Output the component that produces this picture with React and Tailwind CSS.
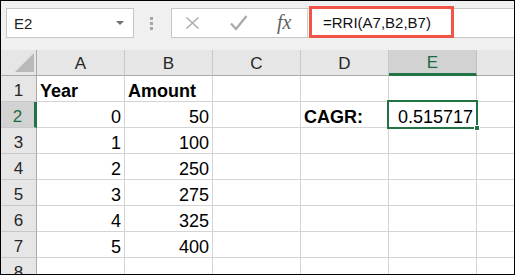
import React from 'react'

const COLS = ['A', 'B', 'C', 'D', 'E', '']

const ROWS = [
    [{ v: 'Year', b: true }, { v: 'Amount', b: true }, null, null, null, null],
    [{ v: '0', r: true }, { v: '50', r: true }, null, { v: 'CAGR:', b: true }, { v: '0.515717', r: true }, null],
    [{ v: '1', r: true }, { v: '100', r: true }, null, null, null, null],
    [{ v: '2', r: true }, { v: '250', r: true }, null, null, null, null],
    [{ v: '3', r: true }, { v: '275', r: true }, null, null, null, null],
    [{ v: '4', r: true }, { v: '325', r: true }, null, null, null, null],
    [{ v: '5', r: true }, { v: '400', r: true }, null, null, null, null],
    [null, null, null, null, null, null],
]

const font = { fontFamily: '"Liberation Sans", Arial, sans-serif' }

function Toolbar() {
    return (
        <div className="h-[49px] bg-[#f0f0f0] flex items-start pt-[7px] pl-[5px]">
            {/* name box */}
            <div className="w-[128px] h-[30px] bg-white border border-[#c6c6c6] flex items-center justify-between pl-[7px] pr-[9px]">
                <span className="text-[15px] text-[#222] leading-none pt-[1px]">E2</span>
                <svg width="8" height="4" viewBox="0 0 8 4"><path d="M0 0h8L4 4z" fill="#707070" /></svg>
            </div>
            {/* grip */}
            <div className="w-[37px] h-[30px] flex flex-col items-center justify-center gap-[2px] pr-[2px]">
                <span className="w-[3px] h-[3px] bg-[#a5a5a5]" />
                <span className="w-[3px] h-[3px] bg-[#a5a5a5]" />
                <span className="w-[3px] h-[3px] bg-[#a5a5a5]" />
            </div>
            {/* formula bar */}
            <div className="flex-1 h-[30px] bg-white border border-[#c6c6c6] border-r-0 flex items-center relative">
                <div className="w-[136px] h-full flex items-center border-r border-[#d0d0d0]">
                    <svg className="ml-[13px]" width="16" height="14" viewBox="0 0 16 14">
                        <path d="M1.5 1.5l12 11M13.5 1.5l-12 11" stroke="#a9a9a9" strokeWidth="1.4" fill="none" />
                    </svg>
                    <svg className="ml-[29px]" width="18" height="16" viewBox="0 0 18 16">
                        <path d="M1 8.5l5 5.5L16.5 1" stroke="#a9a9a9" strokeWidth="2.2" fill="none" />
                    </svg>
                    <span className="ml-[29px] text-[20px] italic text-[#5f5f5f] leading-none pb-[2px]"
                        style={{ fontFamily: '"Liberation Serif", "Times New Roman", serif' }}>fx</span>
                </div>
                <div className="absolute left-[137px] top-[-3px] w-[145px] h-[32px] border-[3px] border-[#f05548] flex items-center pl-[11px]">
                    <span className="text-[15px] text-[#111] leading-none pt-[1px]">=RRI(A7,B2,B7)</span>
                </div>
            </div>
        </div>
    )
}

function Sheet() {
    return (
        <div className="relative overflow-hidden">
            <div className="grid grid-cols-[36px_88px_88px_88px_88px_88px_88px] auto-rows-[26px] w-[564px]">
                {/* corner */}
                <div className="bg-[#e6e6e6] border-r border-b border-[#ababab] relative">
                    <svg className="absolute left-[14px] top-[3px]" width="19" height="19" viewBox="0 0 19 19">
                        <path d="M19 0V19H0z" fill="#b9b9b9" />
                    </svg>
                </div>
                {COLS.map((c, i) => (
                    <div key={i}
                        className={`border-b border-[#ababab] flex items-center justify-center text-[17px] leading-[25px] pt-[2px] ${i === 4 ? 'bg-[#d2d2d2] text-[#1e6b40] border-b-[3px] border-b-[#217346] border-r border-r-[#c0c0c0]' : 'bg-[#e6e6e6] text-[#262626] border-r border-r-[#c8c8c8]'}`}>
                        {c}
                    </div>
                ))}
                {ROWS.map((row, ri) => (
                    <React.Fragment key={ri}>
                        <div className={`border-b border-[#c8c8c8] flex items-end justify-center text-[17px] leading-[19px] pb-[1px] ${ri === 1 ? 'bg-[#d2d2d2] text-[#1e6b40] border-r-[3px] border-r-[#217346]' : 'bg-[#e6e6e6] text-[#262626] border-r border-r-[#ababab]'}`}>
                            {ri + 1}
                        </div>
                        {row.map((cell, ci) => (
                            <div key={ci}
                                className={`border-r border-b border-[#d4d4d4] flex items-end text-[18px] leading-[20px] text-black px-[3px] ${cell && cell.r ? 'justify-end' : 'justify-start'} ${cell && cell.b ? 'font-bold' : ''}`}>
                                {cell ? cell.v : ''}
                            </div>
                        ))}
                    </React.Fragment>
                ))}
            </div>
            {/* active cell */}
            <div className="absolute left-[386px] top-[50px] w-[91px] h-[29px] border-2 border-[#217346]">
                <span className="absolute right-[-4px] bottom-[-4px] w-[6px] h-[6px] bg-[#217346] border border-white" />
            </div>
        </div>
    )
}

export default function App() {
    return (
        <div className="w-[515px] h-[275px] border border-black overflow-hidden bg-white" style={font}>
            <Toolbar />
            <Sheet />
        </div>
    )
}
